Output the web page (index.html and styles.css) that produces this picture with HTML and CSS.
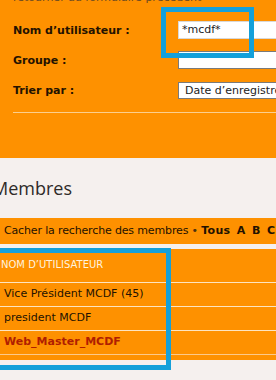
FILE: index.html
```html
<!DOCTYPE html>
<html lang="fr">
<head>
<meta charset="utf-8">
<link rel="stylesheet" href="styles.css">
</head>
<body>
<div class="page">
  <div class="panel">
    <p class="back">retourner au formulaire précédent</p>
    <div class="form">
      <div class="row"><span class="label">Nom d’utilisateur :</span><span class="field light">*mcdf*</span></div>
      <div class="row"><span class="label">Groupe :</span><span class="field"></span></div>
      <div class="row"><span class="label">Trier par :</span><span class="field select">Date d’enregistrement</span></div>
    </div>
    <div class="rule"></div>
  </div>
  <h2 class="title">Membres</h2>
  <div class="bar">Cacher la recherche des membres <span class="dot">•</span> <b>Tous</b> <b class="letter">A</b> <b class="letter">B</b> <b class="letter">C</b></div>
  <div class="table">
    <div class="thead">NOM D’UTILISATEUR</div>
    <div class="trow">Vice Président MCDF (45)</div>
    <div class="trow">president MCDF</div>
    <div class="trow admin">Web_Master_MCDF</div>
  </div>
  <div class="hl hl-input"></div>
  <div class="hl hl-list"></div>
</div>
</body>
</html>
```
FILE: styles.css
```css
html, body {
  margin: 0;
  padding: 0;
  background: #f5f0ee;
  overflow: hidden;
}
.page {
  position: relative;
  margin-top: -9px;
  font-family: "DejaVu Sans", Verdana, sans-serif;
  font-size: 11px;
  color: #231200;
  width: 276px;
  height: 389px;
}
.panel {
  background: #fe9100;
  padding: 0 0 45px 13px;
}
.back {
  margin: 0;
  height: 14px;
  line-height: 14px;
  color: #6b4a22;
}
.form {
  padding-top: 16px;
  display: flex;
  flex-direction: column;
  gap: 12px;
}
.row {
  display: flex;
  align-items: center;
  height: 18px;
}
.label {
  font-weight: bold;
  width: 165px;
  flex: none;
}
.field {
  flex: none;
  box-sizing: border-box;
  width: 140px;
  height: 18px;
  background: #fff;
  border: 1px solid #7a7a7a;
  padding: 0 3px;
  line-height: 16px;
  white-space: nowrap;
  overflow: hidden;
  color: #222;
}
.field.light {
  border-color: #d8d8d8;
}
.field.select {
  height: 17px;
  line-height: 15px;
  padding-left: 6px;
}
.rule {
  margin-top: 13px;
  height: 1px;
  background: #fbcf8f;
}
.title {
  margin: 0;
  padding: 19px 0 19px 0;
  margin-left: -8px;
  font-family: "Open Sans", sans-serif;
  font-weight: normal;
  font-size: 18px;
  line-height: 22px;
  color: #2e2a28;
}
.bar {
  background: #fe9100;
  height: 26px;
  line-height: 26px;
  padding-left: 4px;
  white-space: nowrap;
  margin-bottom: 5px;
  letter-spacing: -0.15px;
}
.bar b {
  letter-spacing: 0.3px;
}
.bar .letter {
  margin-left: 3px;
}
.dot {
  color: #4a3010;
}
.table {
  background: #fe9100;
  padding-bottom: 5px;
}
.thead {
  height: 34px;
  line-height: 32px;
  font-size: 10px;
  color: #fff3df;
  padding-left: 1px;
  border-bottom: 1px solid #fde4c0;
  box-sizing: border-box;
}
.trow {
  height: 24px;
  line-height: 22px;
  padding-left: 4px;
  border-bottom: 1px solid #fde4c0;
  box-sizing: border-box;
}
.trow.admin {
  font-weight: bold;
  color: #b01e00;
  border-bottom-color: #fcc98a;
}
.hl {
  position: absolute;
  border: 5px solid #14a0da;
  box-sizing: border-box;
}
.hl-input {
  left: 161px;
  top: 16px;
  width: 93px;
  height: 51px;
}
.hl-list {
  left: -20px;
  top: 257px;
  width: 191px;
  height: 122px;
}
```
